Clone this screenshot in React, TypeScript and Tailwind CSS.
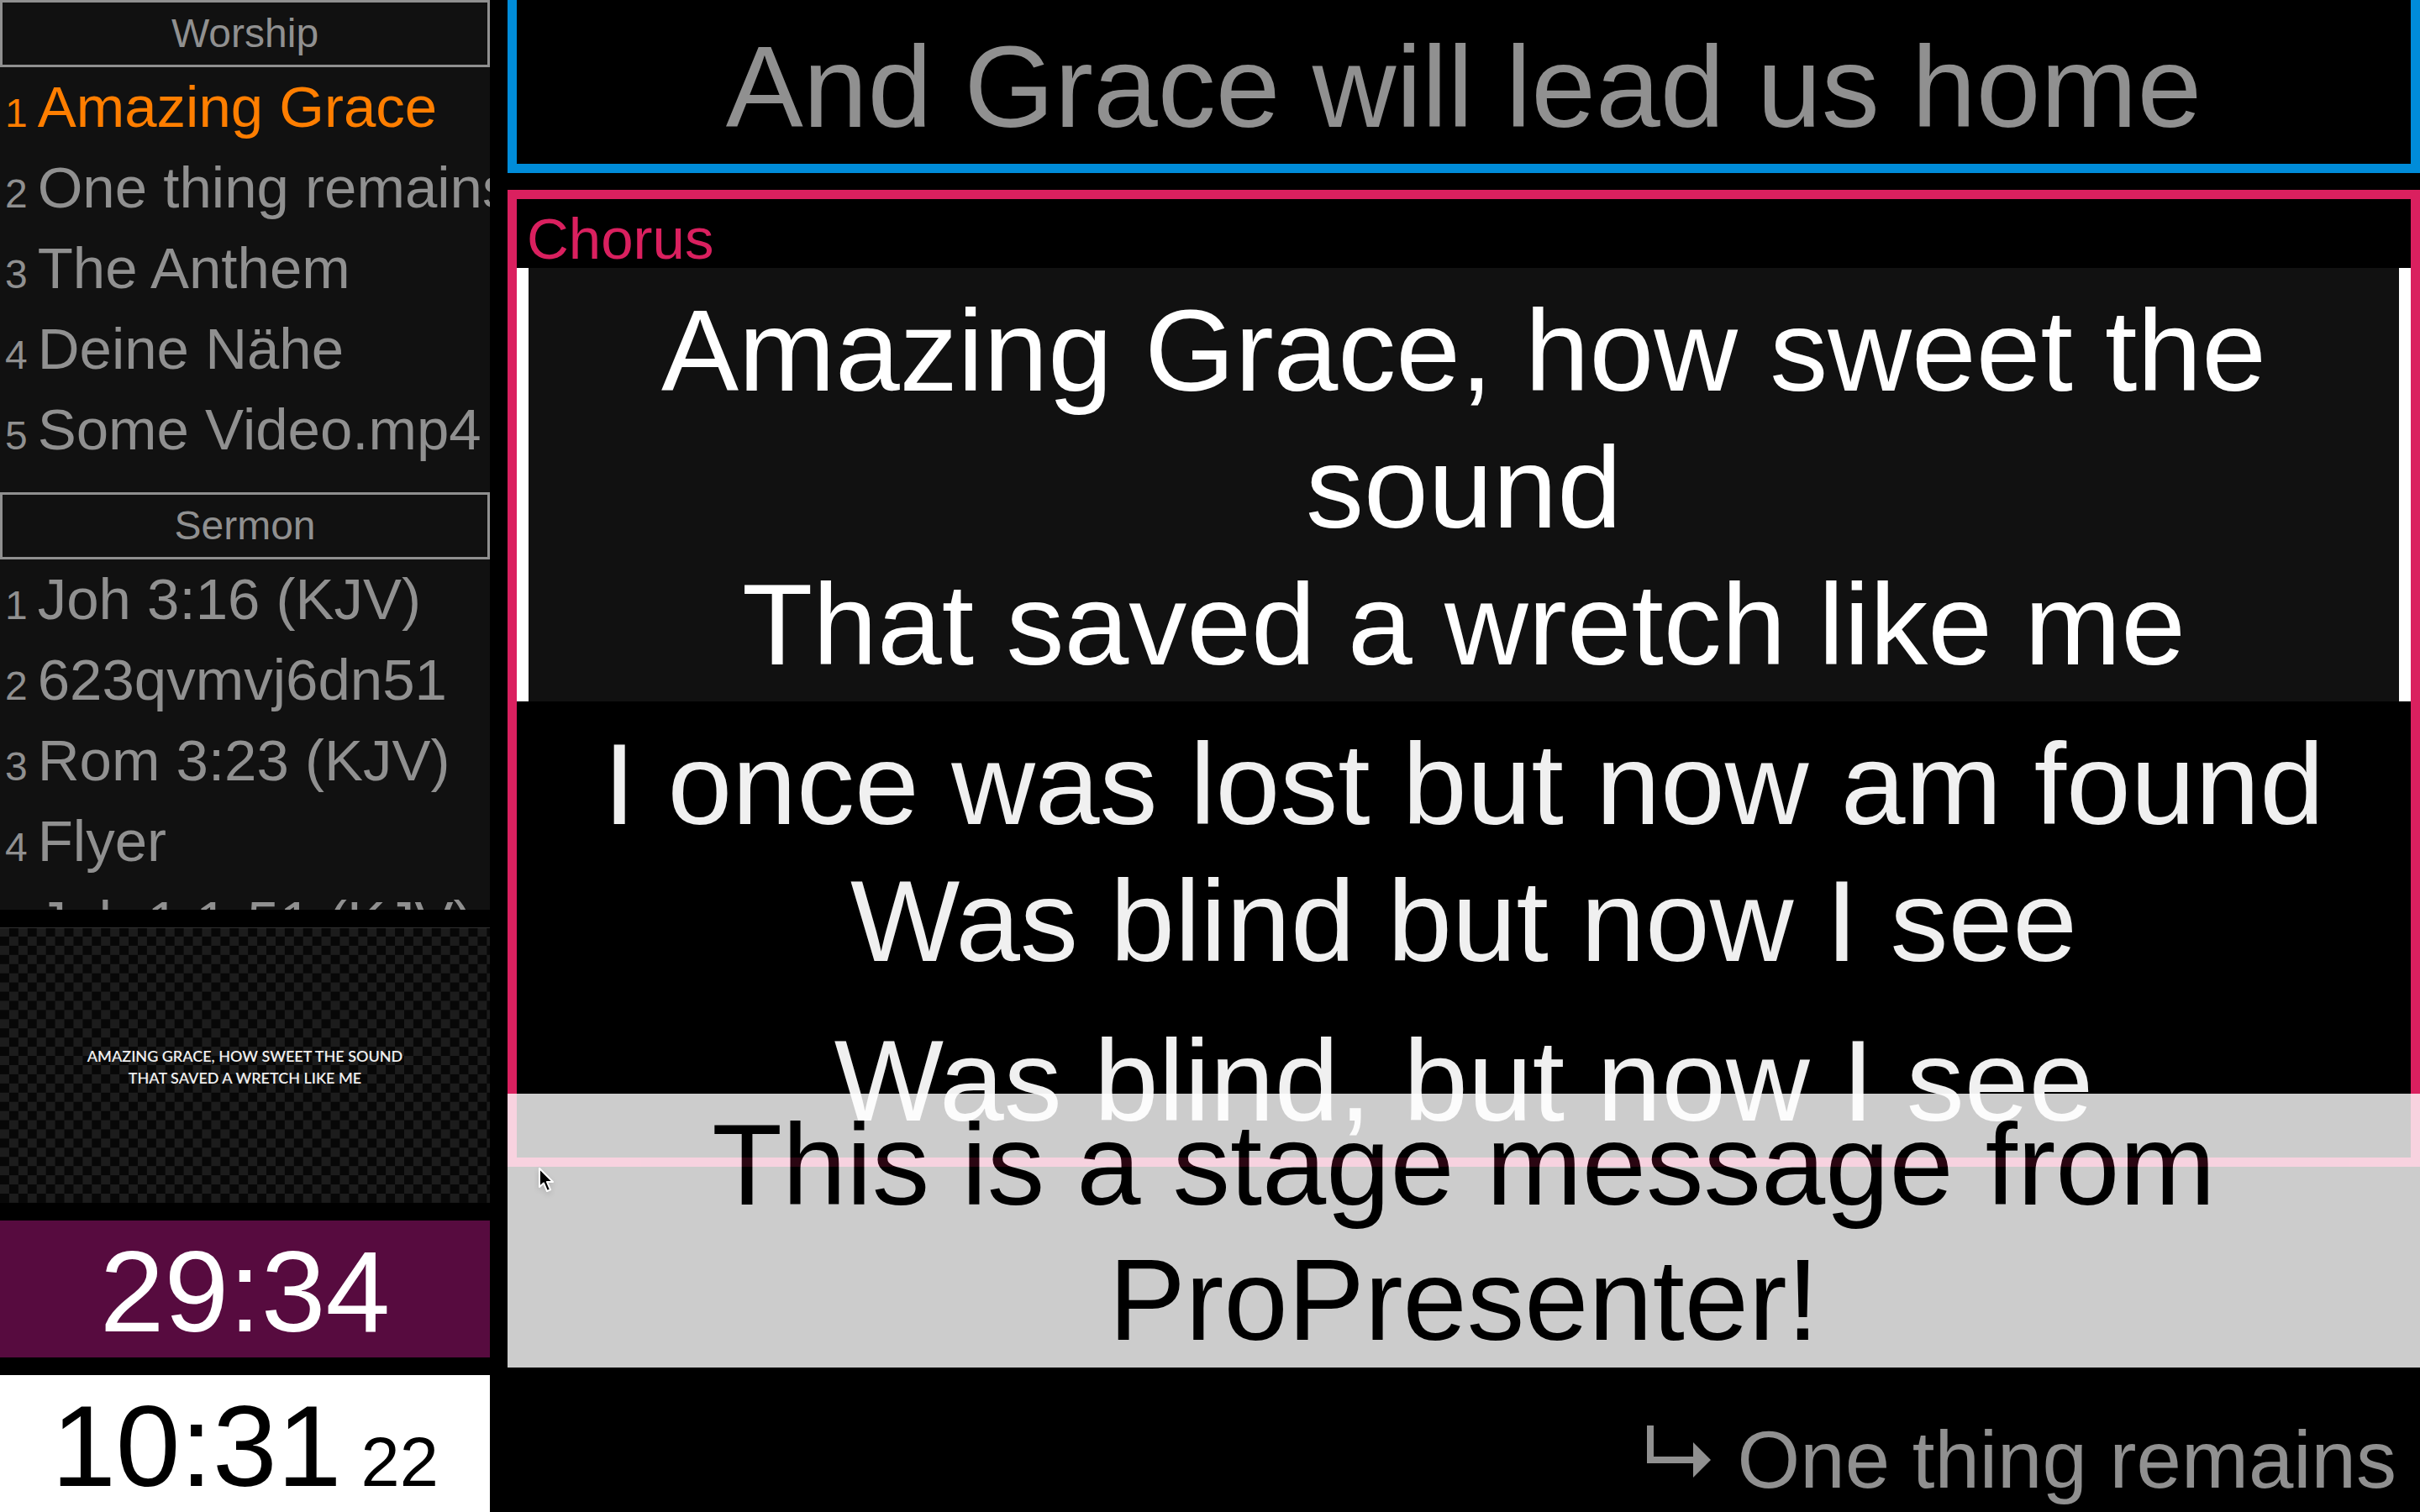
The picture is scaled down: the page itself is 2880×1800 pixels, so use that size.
import React from "react";

type Slide = { lines: string[]; active?: boolean };

const playlist = [
  {
    name: "Worship",
    items: ["Amazing Grace", "One thing remains", "The Anthem", "Deine Nähe", "Some Video.mp4"],
  },
  {
    name: "Sermon",
    items: ["Joh 3:16 (KJV)", "623qvmvj6dn51", "Rom 3:23 (KJV)", "Flyer", "Joh 1:1-51 (KJV)"],
  },
];

const activeItem = "Amazing Grace";

const chorus: Slide[] = [
  { lines: ["Amazing Grace, how sweet the sound", "That saved a wretch like me"], active: true },
  { lines: ["I once was lost but now am found", "Was blind but now I see"] },
  { lines: ["Was blind, but now I see"] },
];

function Playlist() {
  return (
    <nav aria-label="Playlist" className="min-h-0 flex-1 overflow-hidden bg-[#111111] text-[#909090]">
      {playlist.map((section) => (
        <section key={section.name} className="mb-[26px]">
          <h2 className="border-[3px] border-[#909090] py-2 text-center text-[48px] leading-[58px]">
            {section.name}
          </h2>
          <ol>
            {section.items.map((item, i) => (
              <li
                key={item}
                className={
                  item === activeItem
                    ? "flex items-baseline gap-3 pt-[6px] pb-[7px] pl-[6px] whitespace-nowrap text-[#ff7e00]"
                    : "flex items-baseline gap-3 pt-[6px] pb-[7px] pl-[6px] whitespace-nowrap"
                }
              >
                <span className="text-[48px] leading-none">{i + 1}</span>
                <span className="text-[69px] leading-[83px]">{item}</span>
              </li>
            ))}
          </ol>
        </section>
      ))}
    </nav>
  );
}

function Preview() {
  return (
    <figure className="relative aspect-video w-full shrink-0">
      <svg viewBox="0 0 640 360" className="block h-full w-full" aria-hidden="true">
        <defs>
          <pattern id="checker" width="24" height="24" patternUnits="userSpaceOnUse">
            <rect width="24" height="24" fill="#070707" />
            <rect width="12" height="12" fill="#1c1c1c" />
            <rect x="12" y="12" width="12" height="12" fill="#1c1c1c" />
          </pattern>
        </defs>
        <rect width="640" height="360" fill="url(#checker)" />
        <rect width="640" height="1" fill="#333333" />
      </svg>
      <figcaption className="absolute inset-0 flex flex-col items-center justify-center pt-1 text-center font-['Lato',sans-serif] text-[18px] leading-[26px] font-semibold text-[#eeeeee] uppercase">
        <span>Amazing Grace, how sweet the sound</span>
        <span>That saved a wretch like me</span>
      </figcaption>
    </figure>
  );
}

function SlideText({ lines, active }: Slide) {
  return (
    <div
      className={
        active
          ? "border-x-[14px] border-white bg-[#111111] pt-[17px] pb-[10px] text-center text-[138px] leading-[163px] text-white"
          : "px-[14px] pt-[17px] pb-[10px] text-center text-[138px] leading-[163px] text-[#f0f0f0]"
      }
    >
      {lines.map((line) => (
        <p key={line}>{line}</p>
      ))}
    </div>
  );
}

function NextArrow() {
  return (
    <svg width="76" height="62" viewBox="0 0 76 62" fill="#909090" className="mb-5" aria-hidden="true">
      <path d="M0 0H8V37H55V20L76 41L55 62V45H0Z" />
    </svg>
  );
}

function Pointer() {
  return (
    <svg
      width="24"
      height="34"
      viewBox="0 0 24 34"
      className="absolute top-[1389px] left-[36px] drop-shadow-md"
      aria-hidden="true"
    >
      <path
        d="M2 2V24L7 19.500L11 29L15 27.300L11 18H18Z"
        fill="#000000"
        stroke="#ffffff"
        strokeWidth="2"
        strokeLinejoin="round"
      />
    </svg>
  );
}

export default function App() {
  return (
    <div className="grid h-screen grid-cols-[583px_minmax(0,1fr)] gap-[21px] overflow-hidden bg-black font-['Liberation_Sans',Arial,sans-serif]">
      <aside className="flex min-h-0 flex-col gap-[21px]">
        <Playlist />
        <Preview />
        <div
          role="timer"
          aria-label="Countdown"
          className="bg-[#570b3f] pt-[6px] text-center text-[138px] leading-[157px] text-white"
        >
          29:34
        </div>
        <time className="block bg-white pt-[6px] text-center text-[138px] leading-[157px] text-black">
          10:31<span className="text-[83px] leading-none"> 22</span>
        </time>
      </aside>

      <main className="relative flex min-h-0 flex-col">
        <div className="flex min-h-0 flex-1 flex-col gap-5">
          <section className="border-[11px] border-t-0 border-[#008cd9] pt-[22px] pb-[10px] text-center text-[138px] leading-[163px] text-[#909090]">
            <p>And Grace will lead us home</p>
          </section>

          <section className="border-[11px] border-[#da205f]">
            <h1 className="pt-[13px] pl-3 text-[69px] leading-[69px] text-[#da205f]">Chorus</h1>
            {chorus.map((slide) => (
              <SlideText key={slide.lines[0]} {...slide} />
            ))}
          </section>
        </div>

        <footer className="flex items-center justify-end gap-8 pr-7 pb-1 text-[96px] leading-[116px] text-[#909090]">
          <NextArrow />
          <span>One thing remains</span>
        </footer>

        <div
          role="status"
          className="absolute inset-x-0 bottom-[172px] bg-white pt-1 text-center text-[137px] leading-[161px] text-black opacity-80"
        >
          This is a stage message from ProPresenter!
        </div>
        <Pointer />
      </main>
    </div>
  );
}
